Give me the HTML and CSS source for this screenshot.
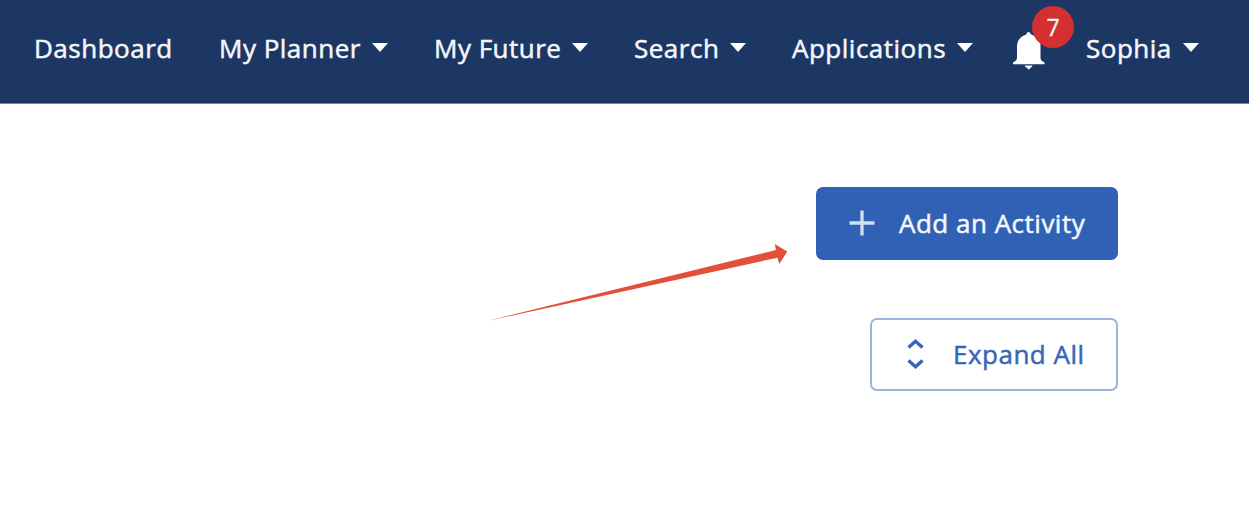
FILE: index.html
```html
<!DOCTYPE html>
<html lang="en">
<head>
<meta charset="utf-8">
<title>My Planner</title>
<link rel="stylesheet" href="styles.css">
</head>
<body>
<nav class="nav">
  <a class="item dashboard">Dashboard</a>
  <a class="item planner">My Planner<i class="caret"></i></a>
  <a class="item future">My Future<i class="caret"></i></a>
  <a class="item search">Search<i class="caret"></i></a>
  <a class="item applications">Applications<i class="caret"></i></a>
  <a class="bell">
    <svg width="34" height="38" viewBox="0 0 34 38"><path fill="#fff" d="M16.500 0c-1.300 0-1.800 1.500-2.500 2.700C8 4.500 5 9 5 14v12c0 1.800-1.500 3.300-4 4.500v1.700h31.500v-1.700c-2.700-1.200-4-2.700-4-4.500V14c0-5-3-9.500-9-11.300C18.500 1.500 17.800 0 16.500 0zM12.700 33.600h7.800c-.4 1.500-1.500 2-2.200 2.500-.8 1.800-2.300 1.800-3.100 0-.7-.5-2.100-1-2.500-2.500z"/></svg>
    <span class="badge">7</span>
  </a>
  <a class="item user">Sophia<i class="caret"></i></a>
</nav>
<main class="content">
  <button class="btn primary"><svg width="26" height="26" viewBox="0 0 26 26"><path d="M13 .5v25M.5 13h25" stroke="#d3def2" stroke-width="3.300"/></svg><span>Add an Activity</span></button>
  <button class="btn outline"><svg width="17" height="32" viewBox="0 0 17 32"><path d="M1.500 9.500L8.500 3.200 15.500 9.500M1.500 22.500L8.500 28.800 15.500 22.500" fill="none" stroke="#3766b9" stroke-width="3.400"/></svg><span>Expand All</span></button>
</main>
<svg class="arrow" width="304" height="82" viewBox="0 0 304 82"><path fill="#e44f3a" d="M1 81L290 10 288.700 4 301.300 11.500 293.300 24 291.500 17.700z"/></svg>
</body>
</html>
```
FILE: styles.css
```css
* { box-sizing: border-box; }
body { margin: 0; height: 514px; overflow: hidden; background: #fff; font-family: "Open Sans", sans-serif; font-size: 26px; letter-spacing: 0.5px; -webkit-text-stroke: 0.5px currentColor; }
.nav { display: flex; height: 104px; padding-left: 34px; background: #1d3765; border-bottom: 1px solid #7886a2; color: #f4f6fa; align-items: flex-start; }
.item { display: flex; align-items: center; height: 96px; white-space: nowrap; flex: none; }
.dashboard { width: 185px; }
.planner { width: 215px; }
.future { width: 200px; }
.search { width: 158px; }
.applications { width: 220px; }
.caret { margin: -2px 0 0 11px; border: 8px solid transparent; border-top: 9px solid #fff; border-bottom: 0; }
.bell { position: relative; width: 74px; padding-top: 32px; height: 98px; }
.badge { position: absolute; left: 20px; top: 6px; width: 42px; height: 42px; border-radius: 50%; background: #d4302f; text-align: center; font-size: 23px; letter-spacing: 0; line-height: 42px; -webkit-text-stroke: 0.3px currentColor; }
.content { display: flex; flex-direction: column; align-items: flex-end; gap: 58px; padding: 83px 131px 0 0; }
.btn { display: flex; align-items: center; border-radius: 7px; font: inherit; letter-spacing: inherit; padding: 0; white-space: nowrap; }
.btn span { padding-bottom: 2px; }
.btn svg { margin-top: -2px; }
.primary { width: 302px; height: 73px; padding-left: 33px; gap: 24px; border: 0; background: #3161b4; color: #f4f7fc; }
.outline { width: 248px; height: 73px; padding-left: 35px; gap: 29px; border: 2px solid #9bb4de; background: #fff; color: #3766b9; }
.arrow { position: absolute; left: 486px; top: 240px; }
```
